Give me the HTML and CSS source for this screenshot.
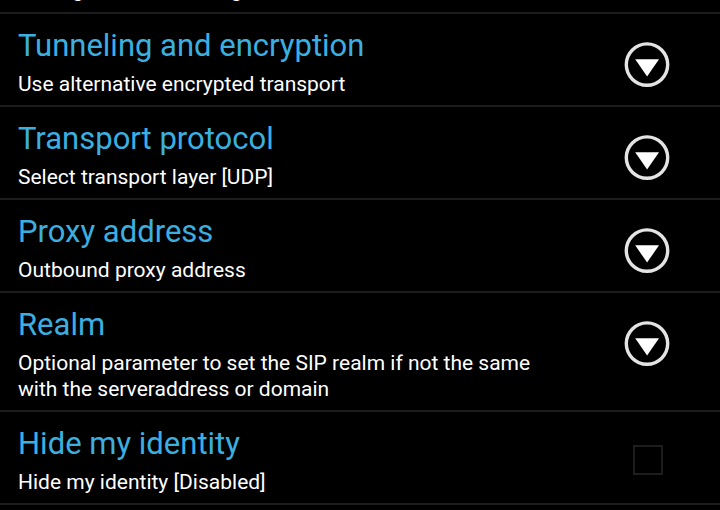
FILE: index.html
```html
<!DOCTYPE html>
<html lang="en">
<head>
<meta charset="utf-8">
<meta name="viewport" content="width=device-width, initial-scale=1">
<title>Settings</title>
<link rel="stylesheet" href="styles.css">
</head>
<body>
<svg class="defs" aria-hidden="true">
  <symbol id="expand" viewBox="0 0 46 46">
    <circle cx="23" cy="22.6" r="20.7" fill="none" stroke="#e4e4e4" stroke-width="3.4"/>
    <path d="M11.2 17.2H35L23.1 34.6Z" fill="#fff"/>
  </symbol>
</svg>
<main class="settings">
  <div class="row row-partial"><p class="summary">Settings of call handling</p></div>
  <section class="row">
    <div class="label">
      <h2 class="title" id="tunneling">Tunneling and encryption</h2>
      <p class="summary">Use alternative encrypted transport</p>
    </div>
    <button class="expand" aria-labelledby="tunneling"><svg class="icon"><use href="#expand"/></svg></button>
  </section>
  <section class="row">
    <div class="label">
      <h2 class="title" id="transport">Transport protocol</h2>
      <p class="summary">Select transport layer [UDP]</p>
    </div>
    <button class="expand" aria-labelledby="transport"><svg class="icon"><use href="#expand"/></svg></button>
  </section>
  <section class="row">
    <div class="label">
      <h2 class="title" id="proxy">Proxy address</h2>
      <p class="summary">Outbound proxy address</p>
    </div>
    <button class="expand" aria-labelledby="proxy"><svg class="icon"><use href="#expand"/></svg></button>
  </section>
  <section class="row">
    <div class="label">
      <h2 class="title" id="realm">Realm</h2>
      <p class="summary">Optional parameter to set the SIP realm if not the same with the serveraddress or domain</p>
    </div>
    <button class="expand" aria-labelledby="realm"><svg class="icon"><use href="#expand"/></svg></button>
  </section>
  <section class="row">
    <label class="label" for="hide">
      <span class="title">Hide my identity</span>
      <span class="summary">Hide my identity [Disabled]</span>
    </label>
    <input class="check" type="checkbox" id="hide">
  </section>
</main>
</body>
</html>
```
FILE: styles.css
```css
* {
  box-sizing: border-box;
}

body {
  margin: 0;
  background: #000;
  color: #fff;
  font-family: Roboto, "Liberation Sans", sans-serif;
  overflow: hidden;
}

.defs {
  display: none;
}

.row {
  display: flex;
  align-items: flex-start;
  gap: 70px;
  padding: 12px 50px 8px 18px;
  border-bottom: 2px solid #1d1d1d;
}

.row-partial {
  height: 14px;
  padding-top: 0;
  padding-bottom: 0;
  align-items: flex-end;
  overflow: hidden;
}

.row-partial .summary {
  padding-bottom: 9px;
}

.label {
  flex: 1;
}

.title,
.summary {
  display: block;
  margin: 0;
  font-weight: 400;
}

.title {
  margin-bottom: 5px;
  color: #3bb0e0;
  font-size: 31px;
  line-height: 40px;
}

.summary {
  font-size: 21px;
  line-height: 26px;
}

.expand {
  margin: 16px 0 0;
  padding: 0;
  border: 0;
  background: none;
}

.icon {
  display: block;
  width: 46px;
  height: 46px;
}

.check {
  appearance: none;
  flex: none;
  width: 30px;
  height: 30px;
  margin: 21px 7px 0;
  border: 2px solid #1d1d1d;
  background: #000;
}

.check:checked {
  background: #33b5e5;
}
```
